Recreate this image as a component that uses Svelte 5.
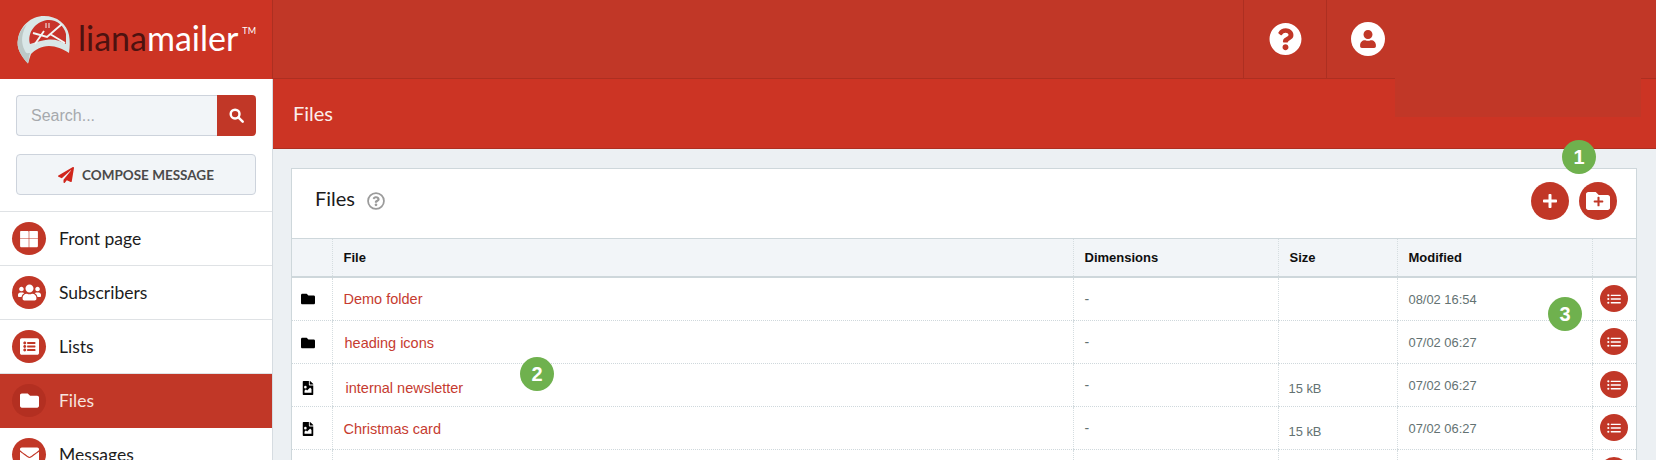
<script>
  const P = {
    folder: ['0 0 512 512', 'M464 128H272l-64-64H48C21.49 64 0 85.49 0 112v288c0 26.51 21.49 48 48 48h416c26.51 0 48-21.49 48-48V176c0-26.51-21.49-48-48-48z'],
    envelope: ['0 0 512 512', 'M502.3 190.8c3.9-3.1 9.7-.2 9.7 4.7V400c0 26.5-21.5 48-48 48H48c-26.5 0-48-21.5-48-48V195.6c0-5 5.7-7.8 9.7-4.7 22.4 17.4 52.1 39.5 154.1 113.6 21.1 15.4 56.7 47.8 92.2 47.6 35.7.3 72-32.8 92.3-47.6 102-74.1 131.6-96.3 154-113.7zM256 320c23.2.4 56.6-29.2 73.4-41.4 132.7-96.3 142.8-104.7 173.4-128.7 5.8-4.5 9.2-11.5 9.2-18.9v-19c0-26.5-21.5-48-48-48H48C21.5 64 0 85.5 0 112v19c0 7.4 3.4 14.3 9.2 18.9 30.6 23.9 40.7 32.4 173.4 128.7 16.8 12.2 50.2 41.8 73.4 41.4z'],
    users: ['0 0 640 512', 'M96 224c35.3 0 64-28.7 64-64s-28.7-64-64-64-64 28.7-64 64 28.7 64 64 64zm448 0c35.3 0 64-28.7 64-64s-28.7-64-64-64-64 28.7-64 64 28.7 64 64 64zm32 32h-64c-17.6 0-33.5 7.1-45.1 18.6 40.3 22.1 68.9 62 75.1 109.4h66c17.7 0 32-14.3 32-32v-32c0-35.3-28.7-64-64-64zm-256 0c61.9 0 112-50.1 112-112S381.9 32 320 32 208 82.1 208 144s50.1 112 112 112zm76.8 32h-8.3c-20.8 10-43.9 16-68.5 16s-47.6-6-68.5-16h-8.3C179.6 288 128 339.6 128 403.2V432c0 26.5 21.5 48 48 48h288c26.5 0 48-21.5 48-48v-28.8c0-63.6-51.6-115.2-115.2-115.2zm-223.7-13.4C161.5 263.1 145.6 256 128 256H64c-35.3 0-64 28.7-64 64v32c0 17.7 14.3 32 32 32h65.9c6.3-47.4 34.9-87.3 75.2-109.4z'],
    listAlt: ['0 0 512 512', 'M464 480H48c-26.51 0-48-21.49-48-48V80c0-26.51 21.49-48 48-48h416c26.51 0 48 21.49 48 48v352c0 26.51-21.49 48-48 48zM128 120c-22.091 0-40 17.909-40 40s17.909 40 40 40 40-17.909 40-40-17.909-40-40-40zm0 96c-22.091 0-40 17.909-40 40s17.909 40 40 40 40-17.909 40-40-17.909-40-40-40zm0 96c-22.091 0-40 17.909-40 40s17.909 40 40 40 40-17.909 40-40-17.909-40-40-40zm288-136v-32c0-6.627-5.373-12-12-12H204c-6.627 0-12 5.373-12 12v32c0 6.627 5.373 12 12 12h200c6.627 0 12-5.373 12-12zm0 96v-32c0-6.627-5.373-12-12-12H204c-6.627 0-12 5.373-12 12v32c0 6.627 5.373 12 12 12h200c6.627 0 12-5.373 12-12zm0 96v-32c0-6.627-5.373-12-12-12H204c-6.627 0-12 5.373-12 12v32c0 6.627 5.373 12 12 12h200c6.627 0 12-5.373 12-12z'],
    grid: ['0 0 512 512', 'M48 48h180c11 0 20 9 20 20v160H28V68c0-11 9-20 20-20zM264 48h200c11 0 20 9 20 20v160H264zM28 244h220v220H48c-11 0-20-9-20-20zM264 244h220v200c0 11-9 20-20 20H264z'],
    question: ['0 0 512 512', 'M504 256c0 136.997-111.043 248-248 248S8 392.997 8 256C8 119.083 119.043 8 256 8s248 111.083 248 248zM262.655 90c-54.497 0-89.255 22.957-116.549 63.758-3.536 5.286-2.353 12.415 2.715 16.258l34.699 26.31c5.205 3.947 12.621 3.008 16.665-2.122 17.864-22.658 30.113-35.797 57.303-35.797 20.429 0 45.698 13.148 45.698 32.958 0 14.976-12.363 22.667-32.534 33.976C247.128 238.528 216 254.941 216 296v4c0 6.627 5.373 12 12 12h56c6.627 0 12-5.373 12-12v-1.333c0-28.462 83.186-29.647 83.186-106.667 0-58.002-60.165-102-116.531-102zM256 338c-25.365 0-46 20.635-46 46 0 25.364 20.635 46 46 46s46-20.636 46-46c0-25.365-20.635-46-46-46z'],
    user: ['0 0 448 512', 'M224 256c70.7 0 128-57.3 128-128S294.7 0 224 0 96 57.3 96 128s57.3 128 128 128zm89.6 32h-16.7c-22.2 10.2-46.9 16-72.9 16s-50.6-5.8-72.9-16h-16.7C60.2 288 0 348.2 0 422.4V464c0 26.5 21.5 48 48 48h352c26.5 0 48-21.5 48-48v-41.6c0-74.2-60.2-134.4-134.4-134.4z'],
    plane: ['0 0 512 512', 'M476 3.2L12.5 270.6c-18.1 10.4-15.8 35.6 2.2 43.2L121 358.4l287.3-253.2c5.5-4.9 13.3 2.6 8.6 8.3L176 407v80.5c0 23.6 28.5 32.9 42.5 15.8L282 426l124.6 52.2c14.2 6 30.4-2.9 33-18.2l72-432C515 7.8 493.3-6.8 476 3.2z'],
    list: ['0 0 512 512', 'M48 80a40 40 0 1 0 0 80 40 40 0 0 0 0-80zm0 136a40 40 0 1 0 0 80 40 40 0 0 0 0-80zm0 136a40 40 0 1 0 0 80 40 40 0 0 0 0-80zM150 96h340c9 0 16 7 16 16v16c0 9-7 16-16 16H150c-9 0-16-7-16-16v-16c0-9 7-16 16-16zm0 136h340c9 0 16 7 16 16v16c0 9-7 16-16 16H150c-9 0-16-7-16-16v-16c0-9 7-16 16-16zm0 136h340c9 0 16 7 16 16v16c0 9-7 16-16 16H150c-9 0-16-7-16-16v-16c0-9 7-16 16-16z'],
    plus: ['0 0 448 512', 'M416 208H272V64c0-17.67-14.33-32-32-32h-32c-17.67 0-32 14.33-32 32v144H32c-17.67 0-32 14.33-32 32v32c0 17.67 14.33 32 32 32h144v144c0 17.67 14.33 32 32 32h32c17.67 0 32-14.33 32-32V304h144c17.67 0 32-14.33 32-32v-32c0-17.67-14.33-32-32-32z'],
    fileImage: ['0 0 384 512', 'M224 136V0H24C10.7 0 0 10.7 0 24v464c0 13.3 10.7 24 24 24h336c13.3 0 24-10.7 24-24V160H248c-13.2 0-24-10.8-24-24zM384 122v6H256V0h6c6.400 0 12.500 2.500 17 7l98 98c4.500 4.500 7 10.600 7 17zM96 176a48 48 0 1 1 0 96 48 48 0 0 1 0-96zM64 432V352l40-40c5-5 12-5 17 0l39 39 103-103c5-5 12-5 17 0l40 40v144z']
  };

  const nav = [
    { label: 'Front page', icon: 'grid', size: 20 },
    { label: 'Subscribers', icon: 'users', size: 23 },
    { label: 'Lists', icon: 'listAlt', size: 19 },
    { label: 'Files', icon: 'folder', size: 19, active: true },
    { label: 'Messages', icon: 'envelope', size: 19 }
  ];

  // drop = how far the row's file name and icon sit below the cell's centre
  const rows = [
    { name: 'Demo folder', icon: 'folder', nudge: 0, drop: 1, dim: '-', size: '', date: '08/02 16:54' },
    { name: 'heading icons', icon: 'folder', nudge: 1, drop: 2, dim: '-', size: '', date: '07/02 06:27' },
    { name: 'internal newsletter', icon: 'fileImage', nudge: 2, drop: 6, dim: '-', size: '15 kB', date: '07/02 06:27' },
    { name: 'Christmas card', icon: 'fileImage', nudge: 0, drop: 2, dim: '-', size: '15 kB', date: '07/02 06:27' },
    { name: '', icon: '', nudge: 0, drop: 0, dim: '', size: '', date: '' }
  ];
</script>

{#snippet icon(name, size)}
  <svg viewBox={P[name][0]} width={size} height={size} fill="currentColor" fill-rule="evenodd" aria-hidden="true"><path d={P[name][1]} /></svg>
{/snippet}

<div class="app">
  <header class="topbar">
    <div class="brand">
      <svg class="mark" viewBox="16 14 56 50" width="56" height="50" aria-hidden="true">
        <path d="M28 62.500C21 55 16 47 18 38 20 25 31 15 44 15c13 0 23 8 25 19 1 6 1 11 0 18-6-4-13-7-20-7-8 0-14 4-18 8-1 3-2 6-3 9.500z" fill="#d9e7e7" />
        <path d="M28 62.500C21 55 16 47 18 38c1-6 4-11 9-15-5 8-7 18-2 27 1 3 3 2 5 2-1 3-1 7-2 10.500z" fill="#bcc9c7" />
        <path d="M30 43C27 32 35 21 47 19c9-1 17 5 19 14l0 10c-5-3-11-5-17-4.500-7 .5-12 2.500-19 4.500z" fill="#c8332a" />
        <path d="M33 32l14 4 15-13M35 43l9-13M65 42L50 33" fill="none" stroke="#f2f6f5" stroke-width="1.900" />
        <path d="M46 22v5M49 22v5" stroke="#f2f6f5" stroke-width="1" />
      </svg>
      <div class="wordmark"><span class="dark">liana</span><span>mailer</span><sup>TM</sup></div>
    </div>
    <div class="spacer"></div>
    <div class="tool"><span class="disc help">{@render icon('question', 34)}</span></div>
    <div class="tool profile"><span class="disc">{@render icon('user', 18)}</span></div>
  </header>

  <div class="body">
    <aside class="sidebar">
      <div class="search">
        <input type="text" placeholder="Search..." aria-label="Search" />
        <button aria-label="Search">
          <svg viewBox="0 0 16 16" width="15" height="15" fill="none" stroke="#fff" stroke-width="2.600" aria-hidden="true"><circle cx="6.500" cy="6.500" r="4.700" /><path d="M10 10l4.600 4.600" stroke-linecap="round" /></svg>
        </button>
      </div>
      <button class="compose">
        <span class="plane">{@render icon('plane', 16)}</span>
        COMPOSE MESSAGE
      </button>
      <nav>
        {#each nav as item}
          <a href="#top" class="nav-item" class:active={item.active}>
            <span class="nav-icon">{@render icon(item.icon, item.size)}</span>
            {item.label}
          </a>
        {/each}
      </nav>
    </aside>

    <main>
      <div class="subheader">Files</div>
      <div class="content">
        <section class="card">
          <div class="card-head">
            <h2>Files</h2>
            <span class="hint">
              <svg viewBox="0 0 512 512" width="18" height="18" aria-hidden="true">
                <circle cx="256" cy="256" r="226" fill="none" stroke="#9b9b9b" stroke-width="50" />
                <path fill="#9b9b9b" d="M262 118c-46 0-75 19-98 54-3 4-2 10 2 13l29 22c4 3 11 3 14-2 15-19 25-30 48-30 17 0 38 11 38 28 0 13-10 19-27 28-20 11-46 25-46 60v3c0 6 4 10 10 10h47c6 0 10-4 10-10v-1c0-24 70-25 70-90 0-49-51-85-97-85zm-6 208c-21 0-39 17-39 39 0 21 18 38 39 38s39-17 39-38c0-22-18-39-39-39z" />
              </svg>
            </span>
            <div class="actions">
              <button class="round" aria-label="New file">{@render icon('plus', 16)}</button>
              <button class="round folder-plus" aria-label="New folder">
                {@render icon('folder', 24)}
                <span class="inner-plus">{@render icon('plus', 11)}</span>
              </button>
            </div>
          </div>
          <table>
            <colgroup>
              <col style="width:40px" /><col style="width:741px" /><col style="width:205px" />
              <col style="width:119px" /><col style="width:195px" /><col />
            </colgroup>
            <thead>
              <tr><th></th><th>File</th><th>Dimensions</th><th>Size</th><th>Modified</th><th></th></tr>
            </thead>
            <tbody>
              {#each rows as row}
                <tr>
                  <td class="type" style="padding-top:{row.drop}px">{#if row.icon}{@render icon(row.icon, 14)}{/if}</td>
                  <td class="name" style="padding-top:{row.drop}px"><a href="#top" style="margin-left:{row.nudge}px">{row.name}</a></td>
                  <td class="muted dim">{row.dim}</td>
                  <td class="muted size">{row.size}</td>
                  <td class="muted date">{row.date}</td>
                  <td class="menu"><button class="small" aria-label="Actions">{@render icon('list', 14)}</button></td>
                </tr>
              {/each}
            </tbody>
          </table>
        </section>
      </div>
    </main>
  </div>

  <div class="redaction"></div>
  <span class="badge one">1</span>
  <span class="badge two">2</span>
  <span class="badge three">3</span>
</div>

<style>
  :global(body) {
    margin: 0;
    background: #ecf0f3;
  }
  .app {
    position: relative;
    width: 1656px;
    height: 460px;
    overflow: hidden;
    font-family: "Liberation Sans", Arial, sans-serif;
    background: #ecf0f3;
  }
  .topbar {
    display: flex;
    height: 78px;
    background: #c13727;
    border-bottom: 1px solid #ad2f21;
  }
  .brand {
    display: flex;
    align-items: center;
    gap: 6px;
    width: 273px;
    height: 79px;
    padding-left: 16px;
    box-sizing: border-box;
    background: #cc3424;
    border-right: 1px solid #ad2f21;
    flex: none;
  }
  .mark {
    flex: none;
  }
  .wordmark {
    font-family: Lato, sans-serif;
    font-size: 34px;
    font-weight: 400;
    color: #fff;
    line-height: 1;
    white-space: nowrap;
    margin-top: -3px;
  }
  .wordmark .dark {
    color: #4d1210;
  }
  .wordmark sup {
    font-size: 9px;
    vertical-align: 17px;
    line-height: 0;
    margin-left: 4px;
  }
  .spacer {
    flex: 1;
  }
  .tool {
    width: 82px;
    height: 78px;
    display: flex;
    align-items: center;
    justify-content: center;
    border-left: 1px solid #ad2f21;
    flex: none;
  }
  .profile {
    width: 330px;
    justify-content: flex-start;
    padding-left: 24px;
    box-sizing: border-box;
  }
  .disc {
    width: 34px;
    height: 34px;
    border-radius: 50%;
    background: #fff;
    color: #c13727;
    display: flex;
    align-items: center;
    justify-content: center;
  }
  .help {
    background: #c13727;
    color: #fff;
    width: 33px;
    height: 33px;
  }
  .body {
    display: flex;
    height: 381px;
  }
  .sidebar {
    width: 273px;
    height: 381px;
    box-sizing: border-box;
    background: #fff;
    border-right: 1px solid #d6dce1;
    padding-top: 16px;
    flex: none;
    font-family: Lato, sans-serif;
  }
  .search {
    display: flex;
    height: 41px;
    margin: 0 16px;
  }
  .search input {
    flex: 1;
    min-width: 0;
    box-sizing: border-box;
    border: 1px solid #cdd3dc;
    border-right: 0;
    border-radius: 4px 0 0 4px;
    background: #f2f5f8;
    padding: 0 14px;
    font-family: "Liberation Sans", Arial, sans-serif;
    font-size: 16px;
  }
  .search input::placeholder {
    color: #a6a9ad;
    opacity: 1;
  }
  .search button {
    width: 39px;
    border: 0;
    padding: 0;
    border-radius: 0 4px 4px 0;
    background: #c13727;
    display: flex;
    align-items: center;
    justify-content: center;
  }
  .compose {
    display: flex;
    align-items: center;
    justify-content: center;
    gap: 8px;
    width: 240px;
    height: 41px;
    margin: 18px 16px 16px;
    border: 1px solid #cdd3dc;
    border-radius: 4px;
    background: #f2f5f8;
    color: #4a4a4a;
    font-family: Lato, sans-serif;
    font-size: 13.500px;
    font-weight: 700;
    padding: 0;
  }
  .plane {
    color: #d0261c;
    display: flex;
  }
  nav {
    border-top: 1px solid #dfe2e5;
  }
  .nav-item {
    display: flex;
    align-items: center;
    gap: 13px;
    height: 53px;
    padding-left: 12px;
    border-bottom: 1px solid #dfe2e5;
    color: #1c1c1c;
    font-size: 17.500px;
    text-decoration: none;
  }
  .nav-icon {
    width: 34px;
    height: 33px;
    border-radius: 50%;
    background: #c13727;
    color: #fff;
    display: flex;
    align-items: center;
    justify-content: center;
  }
  .nav-item.active {
    background: #c13727;
    color: #f7e3df;
    border-bottom-color: #c13727;
  }
  .nav-item.active .nav-icon {
    background: #b32f21;
  }
  main {
    flex: 1;
    min-width: 0;
  }
  .subheader {
    height: 70px;
    box-sizing: border-box;
    background: #cc3424;
    border-bottom: 1px solid #ad2f21;
    color: #fbeeeb;
    font-family: Lato, sans-serif;
    font-size: 20px;
    line-height: 69px;
    padding-left: 20px;
  }
  .content {
    padding: 19px 19px 0 18px;
  }
  .card {
    background: #fff;
    border: 1px solid #ced7db;
  }
  .card-head {
    display: flex;
    align-items: center;
    height: 63px;
    padding: 0 19px 6px 23px;
    border-bottom: 1px solid #ced7db;
  }
  h2 {
    margin: 0 0 5px;
    font-family: Lato, sans-serif;
    font-size: 20px;
    font-weight: 400;
    color: #1b1b1b;
  }
  .hint {
    display: flex;
    margin-left: 12px;
  }
  .actions {
    margin-left: auto;
    display: flex;
    gap: 10px;
  }
  .round {
    width: 38px;
    height: 38px;
    border: 0;
    padding: 0;
    border-radius: 50%;
    background: #c13727;
    color: #fff;
    display: flex;
    align-items: center;
    justify-content: center;
  }
  .folder-plus {
    position: relative;
  }
  .inner-plus {
    position: absolute;
    left: 14px;
    top: 14px;
    color: #c13727;
    display: flex;
  }
  table {
    width: 100%;
    table-layout: fixed;
    border-collapse: collapse;
  }
  th {
    height: 38px;
    padding: 0 0 0 11px;
    box-sizing: border-box;
    text-align: left;
    font-size: 13px;
    font-weight: 700;
    color: #0f0f0f;
    background: #f2f5f8;
    border-bottom: 2px solid #ced7db;
    border-left: 1px dotted #d5dde0;
  }
  th:first-child,
  td:first-child {
    border-left: 0;
  }
  td {
    height: 43px;
    padding: 0 0 0 11px;
    box-sizing: border-box;
    font-size: 14.500px;
    border-bottom: 1px dotted #cfd8dc;
    border-left: 1px dotted #d5dde0;
  }
  .type {
    padding-left: 9px;
    color: #000;
  }
  .type svg {
    display: block;
  }
  .name a {
    color: #c63b30;
    text-decoration: none;
  }
  .muted {
    color: #637272;
    font-size: 12.900px;
    padding-top: 1px;
  }
  .dim {
    font-size: 14px;
  }
  .size {
    padding-top: 8px;
    padding-left: 10px;
  }
  .menu {
    padding: 0 0 0 7px;
  }
  .small {
    width: 28px;
    height: 27px;
    border: 0;
    padding: 0;
    border-radius: 50%;
    background: #c13727;
    color: #fff;
    display: flex;
    align-items: center;
    justify-content: center;
  }
  .redaction {
    position: absolute;
    left: 1395px;
    top: 78px;
    width: 246px;
    height: 39px;
    background: #c13727;
  }
  .badge {
    position: absolute;
    width: 34px;
    height: 34px;
    border-radius: 50%;
    background: #6fb14e;
    color: #fff;
    font-size: 20px;
    font-weight: 700;
    text-align: center;
    line-height: 34px;
  }
  .one {
    left: 1562px;
    top: 140px;
  }
  .two {
    left: 520px;
    top: 357px;
  }
  .three {
    left: 1548px;
    top: 297px;
  }
</style>
